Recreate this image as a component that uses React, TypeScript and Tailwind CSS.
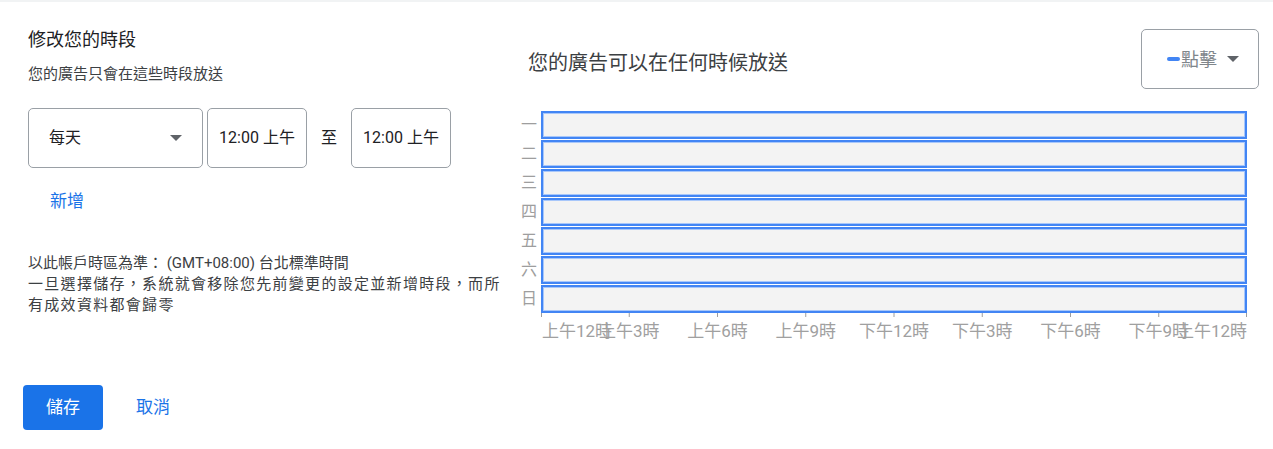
import React from 'react'

const DAYS = ['一', '二', '三', '四', '五', '六', '日']

const TICKS = [
  { label: '上午12時', anchor: 'start' },
  { label: '上午3時', anchor: 'middle' },
  { label: '上午6時', anchor: 'middle' },
  { label: '上午9時', anchor: 'middle' },
  { label: '下午12時', anchor: 'middle' },
  { label: '下午3時', anchor: 'middle' },
  { label: '下午6時', anchor: 'middle' },
  { label: '下午9時', anchor: 'middle' },
  { label: '上午12時', anchor: 'end' },
]

const CHART_W = 706

function Caret() {
  return (
    <svg width="12" height="6" viewBox="0 0 12 6" className="shrink-0">
      <path d="M0 0h12L6 6z" fill="#5f6368" />
    </svg>
  )
}

function TimeBox({ value }: { value: string }) {
  return (
    <div className="w-[100px] h-[60px] flex items-center justify-center rounded-[5px] border border-[#9aa0a6] text-[16px] text-[#202124]">
      {value}
    </div>
  )
}

function Axis() {
  const step = CHART_W / 8
  return (
    <svg width={CHART_W} height="32" className="overflow-visible block">
      {TICKS.map((t, i) => {
        const x = Math.min(Math.max(i * step, 0.5), CHART_W - 0.5)
        return (
          <g key={i}>
            <line x1={x} y1="0" x2={x} y2="4" stroke="#9e9e9e" strokeWidth="1" />
            <text
              x={t.anchor === 'start' ? 1 : t.anchor === 'end' ? CHART_W : x}
              y="24"
              textAnchor={t.anchor as 'start' | 'middle' | 'end'}
              fill="#a0a0a0"
              fontSize="17"
            >
              {t.label}
            </text>
          </g>
        )
      })}
    </svg>
  )
}

export default function App() {
  return (
    <div className="w-[1273px] h-[449px] bg-white border-t-2 border-[#f1f3f4] font-['Roboto','Noto_Sans_CJK_TC',sans-serif] overflow-hidden">
      <div className="flex">
        {/* left: edit schedule */}
        <div className="w-[520px] shrink-0 pl-[28px]">
          <h2 className="mt-[26px] text-[18px] leading-[24px] text-[#202124]">修改您的時段</h2>
          <p className="mt-[12px] text-[15px] leading-[20px] text-[#3c4043]">您的廣告只會在這些時段放送</p>

          <div className="mt-[24px] flex items-center">
            <div className="w-[175px] h-[60px] flex items-center justify-between pl-[20px] pr-[20px] rounded-[5px] border border-[#9aa0a6] text-[16px] text-[#202124]">
              <span>每天</span>
              <Caret />
            </div>
            <div className="ml-[4px]">
              <TimeBox value="12:00 上午" />
            </div>
            <span className="mx-[14px] text-[16px] text-[#202124]">至</span>
            <TimeBox value="12:00 上午" />
          </div>

          <button className="mt-[21px] ml-[22px] block text-[17px] leading-[24px] text-[#1a73e8]">新增</button>

          <div className="mt-[40px] text-[15px] leading-[21px] text-[#3c4043]">
            <p>以此帳戶時區為準： (GMT+08:00) 台北標準時間</p>
            <p className="tracking-[1.3px]">一旦選擇儲存，系統就會移除您先前變更的設定並新增時段，而所</p>
            <p className="tracking-[1.3px]">有成效資料都會歸零</p>
          </div>

          <div className="mt-[69px] -ml-[5px] flex items-center">
            <button className="w-[80px] h-[45px] rounded-[4px] bg-[#1a73e8] text-white text-[17px]">儲存</button>
            <button className="ml-[33px] text-[17px] text-[#1a73e8]">取消</button>
          </div>
        </div>

        {/* right: preview chart */}
        <div className="flex-1 pr-[14px]">
          <div className="flex items-start justify-between">
            <h2 className="mt-[47px] pl-[8px] text-[20px] leading-[28px] text-[#3c4043]">您的廣告可以在任何時候放送</h2>
            <div className="mt-[27px] w-[118px] h-[60px] flex items-center pl-[25px] rounded-[5px] border border-[#9aa0a6]">
              <span className="w-[13px] h-[4px] rounded-full bg-[#4285f4]" />
              <span className="ml-[1px] text-[18px] text-[#80868b]">點擊</span>
              <span className="ml-[10px]">
                <Caret />
              </span>
            </div>
          </div>

          <div className="mt-[22px] flex flex-col gap-[1px]">
            {DAYS.map((d) => (
              <div key={d} className="flex items-center">
                <span className="w-[21px] pr-[4px] text-right text-[16px] leading-[28px] text-[#9e9e9e]">{d}</span>
                <div className="w-[706px] h-[28px] border-2 border-[#4285f4] bg-[#f3f3f3] shadow-[inset_0_0_0_1px_#a8c7fa]" />
              </div>
            ))}
          </div>
          <div className="ml-[21px]">
            <Axis />
          </div>
        </div>
      </div>
    </div>
  )
}
